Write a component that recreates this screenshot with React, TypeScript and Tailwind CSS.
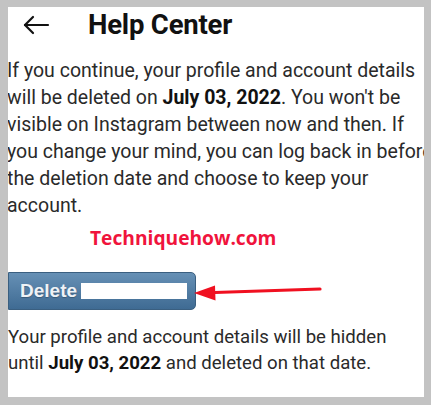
const Arrow = () => (
  <svg width="28" height="22" viewBox="0 0 28 22" fill="none" stroke="#111" strokeWidth="2.2" strokeLinecap="round" strokeLinejoin="round">
    <path d="M26 11H3" />
    <path d="M11 3L3 11l8 8" />
  </svg>
);

const RedArrow = () => (
  <svg width="130" height="24" viewBox="0 0 130 24" className="ml-[-3px]">
    <path d="M22 13.5L127 10" stroke="#f01020" strokeWidth="3.2" strokeLinecap="round" />
    <path d="M1 14L22 6.5L22.5 21.5Z" fill="#f01020" />
  </svg>
);

export default function App() {
  return (
    <div className="w-[431px] h-[405px] bg-[#c3c3c3] pt-[7px] pb-[8px] pl-[8px] pr-[7px]">
      <div className="w-full h-full bg-white overflow-hidden font-['Roboto',sans-serif]">
        <div className="flex items-center h-[36px] pl-[14px]">
          <Arrow />
          <h1 className="ml-[38px] text-[27.5px] font-bold text-[#111] tracking-[-0.2px]">Help Center</h1>
        </div>

        <p className="mt-[13.5px] ml-[-1px] text-[19.5px] leading-[27px] text-[#2a2a2a] whitespace-nowrap">
          If you continue, your profile and account details<br />
          will be deleted on <b className="text-[#111]">July 03, 2022</b>. You won't be<br />
          visible on Instagram between now and then. If<br />
          you change your mind, you can log back in before<br />
          the deletion date and choose to keep your<br />
          account.
        </p>

        <div className="mt-[5.5px] pl-[82px] font-['Open_Sans',sans-serif] font-bold text-[19.2px] text-[#f0143c] leading-[28px]">
          Techniquehow.com
        </div>

        <div className="mt-[20px] flex items-center">
          <button className="flex items-center h-[38px] w-[188px] rounded-r-[5px] bg-gradient-to-b from-[#6690b5] to-[#3f6b93] border border-[#3a5f80] pl-[11px] text-[#eef2f6] font-bold text-[19px] font-['Liberation_Sans',sans-serif] [text-shadow:0_1px_1px_rgba(0,0,0,0.25)]">
            Delete
            <span className="ml-[4px] w-[106px] h-[16px] bg-white"></span>
          </button>
          <RedArrow />
        </div>

        <p className="mt-[14px] text-[18.6px] leading-[26px] text-[#2a2a2a] whitespace-nowrap">
          Your profile and account details will be hidden<br />
          until <b className="text-[#111]">July 03, 2022</b> and deleted on that date.
        </p>
      </div>
    </div>
  );
}
